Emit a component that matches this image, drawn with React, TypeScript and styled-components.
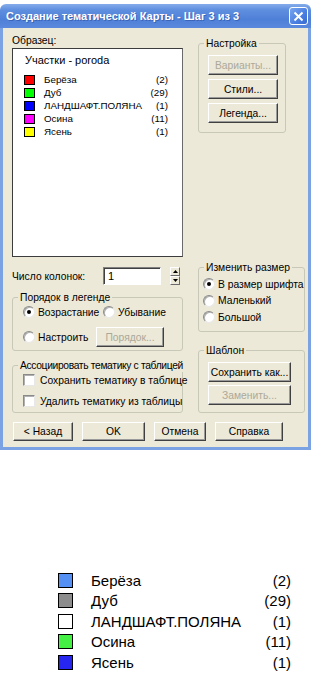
import React from "react";
import styled, { createGlobalStyle } from "styled-components";

const GlobalStyle = createGlobalStyle`
  html, body {
    margin: 0;
    padding: 0;
    background: #ffffff;
  }
  body {
    font-family: "Liberation Sans", Arial, sans-serif;
  }
`;

const FACE = "#ece9d8";

const Page = styled.div`
  width: 312px;
  height: 679px;
  display: flex;
  flex-direction: column;
  background: #ffffff;
  overflow: hidden;
`;

const Window = styled.div`
  width: 311px;
  margin-top: 4px;
  display: flex;
  flex-direction: column;
`;

const TitleBar = styled.div`
  height: 24px;
  border-radius: 6px 6px 0 0;
  background: linear-gradient(
    180deg,
    #86adeb 0%,
    #5e8ede 25%,
    #4f80d8 65%,
    #5a89dd 100%
  );
  display: flex;
  align-items: center;
  justify-content: space-between;
  padding: 0 3px 0 6px;
`;

const TitleText = styled.span`
  color: #ffffff;
  font: bold 11px "Liberation Sans", Arial, sans-serif;
  text-shadow: 1px 1px 0 #3a64b8;
  white-space: nowrap;
`;

const CloseButton = styled.div`
  width: 19px;
  height: 18px;
  box-sizing: border-box;
  border: 1px solid #ffffff;
  border-radius: 3px;
  background: linear-gradient(135deg, #78a6f0 0%, #4a7ee0 60%, #3a6cd0 100%);
  display: flex;
  align-items: center;
  justify-content: center;
`;

const Frame = styled.div`
  background: ${FACE};
  border: 3px solid #7ba3e4;
  border-top: none;
  padding: 6px 3px 6px 9px;
  display: flex;
  flex-direction: column;
  font: 10.3px "Liberation Sans", Arial, sans-serif;
  color: #000000;
`;

const TopArea = styled.div`
  display: flex;
  gap: 15px;
`;

const LeftColumn = styled.div`
  width: 171px;
  display: flex;
  flex-direction: column;
`;

const RightColumn = styled.div`
  width: 107px;
  display: flex;
  flex-direction: column;
`;

const FieldLabel = styled.div`
  line-height: 13px;
  height: 13px;
`;

const SampleBox = styled.div`
  margin-top: 1px;
  height: 209px;
  box-sizing: border-box;
  background: #ffffff;
  border: 1px solid #3c3c3c;
  border-right-color: #6a6a6a;
  padding: 4px 14px 0 11px;
  display: flex;
  flex-direction: column;
`;

const SampleTitle = styled.div`
  font-size: 11px;
  line-height: 14px;
  margin: 0 0 6px 1px;
`;

const SampleRow = styled.div`
  height: 13px;
  display: flex;
  align-items: center;
  font-size: 9.8px;
`;

const SmallSwatch = styled.span<{ $color: string }>`
  width: 11px;
  height: 10px;
  box-sizing: border-box;
  border: 1px solid #000000;
  background: ${({ $color }) => $color};
  margin-right: 9px;
  flex: none;
`;

const RowName = styled.span`
  flex: 1;
  white-space: nowrap;
`;

const RowCount = styled.span`
  white-space: nowrap;
`;

const ColumnsRow = styled.div`
  margin-top: 10px;
  height: 18px;
  display: flex;
  align-items: center;
`;

const ColumnsLabel = styled.span`
  width: 91px;
`;

const NumberInput = styled.div`
  width: 58px;
  height: 18px;
  box-sizing: border-box;
  background: #ffffff;
  border: 1px solid;
  border-color: #808080 #ffffff #ffffff #808080;
  box-shadow: inset 1px 1px 0 #404040;
  padding: 0 0 0 4px;
  display: flex;
  align-items: center;
  font-size: 11px;
`;

const Spinner = styled.div`
  margin-left: 9px;
  width: 10px;
  height: 18px;
  display: flex;
  flex-direction: column;
`;

const SpinButton = styled.div`
  flex: 1;
  box-sizing: border-box;
  background: ${FACE};
  border: 1px solid;
  border-color: #ffffff #6a6a6a #6a6a6a #ffffff;
  display: flex;
  align-items: center;
  justify-content: center;
`;

const GroupBox = styled.div<{ $top: number; $width?: number; $pad: string }>`
  margin-top: ${({ $top }) => $top}px;
  width: ${({ $width }) => ($width ? `${$width}px` : "auto")};
  box-sizing: border-box;
  border: 1px solid #c8c8b8;
  border-radius: 3px;
  padding: ${({ $pad }) => $pad};
  display: flex;
  flex-direction: column;
`;

const GroupTitle = styled.div<{ $spacing?: number }>`
  align-self: flex-start;
  margin: -7px 0 0 5px;
  padding: 0 2px;
  height: 13px;
  line-height: 13px;
  background: ${FACE};
  white-space: nowrap;
  letter-spacing: ${({ $spacing }) => $spacing ?? 0}px;
`;

const GroupBody = styled.div<{ $left: number }>`
  padding-left: ${({ $left }) => $left}px;
  display: flex;
  flex-direction: column;
`;

const OptionRow = styled.div<{ $height: number; $top?: number }>`
  height: ${({ $height }) => $height}px;
  margin-top: ${({ $top }) => $top ?? 0}px;
  display: flex;
  align-items: center;
`;

const Option = styled.div<{ $width?: number }>`
  width: ${({ $width }) => ($width ? `${$width}px` : "auto")};
  display: flex;
  align-items: center;
  white-space: nowrap;
`;

const RadioCircle = styled.span`
  width: 12px;
  height: 12px;
  box-sizing: border-box;
  border-radius: 50%;
  background: #ffffff;
  border: 1px solid;
  border-color: #8a8a8a #e8e8e8 #e8e8e8 #8a8a8a;
  box-shadow: inset 1px 1px 0 #b0b0b0;
  margin-right: 3px;
  display: flex;
  align-items: center;
  justify-content: center;
  flex: none;
`;

const RadioDot = styled.span`
  width: 4px;
  height: 4px;
  border-radius: 50%;
  background: #000000;
`;

const CheckSquare = styled.span`
  width: 12px;
  height: 12px;
  box-sizing: border-box;
  background: #ffffff;
  border: 1px solid;
  border-color: #8a8a8a #e8e8e8 #e8e8e8 #8a8a8a;
  box-shadow: inset 1px 1px 0 #b0b0b0;
  margin-right: 5px;
  flex: none;
`;

const Button = styled.div<{ $width: number; $height?: number; $top?: number; $disabled?: boolean }>`
  width: ${({ $width }) => $width}px;
  height: ${({ $height }) => $height ?? 20}px;
  margin-top: ${({ $top }) => $top ?? 0}px;
  box-sizing: border-box;
  background: ${FACE};
  border: 1px solid;
  border-color: #ffffff #404040 #404040 #ffffff;
  box-shadow: inset -1px -1px 0 #9a9a9a;
  display: flex;
  align-items: center;
  justify-content: center;
  color: ${({ $disabled }) => ($disabled ? "#aca899" : "#000000")};
  white-space: nowrap;
  flex: none;
`;

const ButtonBar = styled.div`
  margin: 9px 0 0 1px;
  display: flex;
  gap: 9px;
`;

const Legend = styled.div`
  margin-top: 120px;
  width: 233px;
  margin-left: 58px;
  display: flex;
  flex-direction: column;
  font: 15px "Liberation Sans", Arial, sans-serif;
  color: #000000;
`;

const LegendRow = styled.div`
  height: 20.5px;
  display: flex;
  align-items: center;
`;

const LegendSwatch = styled.span<{ $color: string }>`
  width: 15px;
  height: 15px;
  box-sizing: border-box;
  border: 1px solid #000000;
  background: ${({ $color }) => $color};
  margin-right: 18px;
  flex: none;
`;

const sampleRows = [
  { name: "Берёза", count: 2, color: "#ff0000" },
  { name: "Дуб", count: 29, color: "#00ff00" },
  { name: "ЛАНДШАФТ.ПОЛЯНА", count: 1, color: "#0000ff" },
  { name: "Осина", count: 11, color: "#ff00ff" },
  { name: "Ясень", count: 1, color: "#ffff00" },
];

const legendRows = [
  { name: "Берёза", count: 2, color: "#5591f4" },
  { name: "Дуб", count: 29, color: "#8c8c8c" },
  { name: "ЛАНДШАФТ.ПОЛЯНА", count: 1, color: "#ffffff" },
  { name: "Осина", count: 11, color: "#44f044" },
  { name: "Ясень", count: 1, color: "#2626f0" },
];

const Radio: React.FC<{ checked?: boolean }> = ({ checked }) => (
  <RadioCircle>{checked && <RadioDot />}</RadioCircle>
);

const Arrow: React.FC<{ up?: boolean }> = ({ up }) => (
  <svg width="5" height="3" viewBox="0 0 5 3">
    <path d={up ? "M0 3 L2.5 0 L5 3 Z" : "M0 0 L2.5 3 L5 0 Z"} fill="#000" />
  </svg>
);

const App: React.FC = () => (
  <Page>
    <GlobalStyle />
    <Window>
      <TitleBar>
        <TitleText>Создание тематической Карты - Шаг 3 из 3</TitleText>
        <CloseButton>
          <svg width="11" height="11" viewBox="0 0 11 11">
            <path d="M1.5 1.5 L9.5 9.5 M9.5 1.5 L1.5 9.5" stroke="#fff" strokeWidth="2" />
          </svg>
        </CloseButton>
      </TitleBar>
      <Frame>
        <TopArea>
          <LeftColumn>
            <FieldLabel>Образец:</FieldLabel>
            <SampleBox>
              <SampleTitle>Участки - poroda</SampleTitle>
              {sampleRows.map((r) => (
                <SampleRow key={r.name}>
                  <SmallSwatch $color={r.color} />
                  <RowName>{r.name}</RowName>
                  <RowCount>({r.count})</RowCount>
                </SampleRow>
              ))}
            </SampleBox>
            <ColumnsRow>
              <ColumnsLabel>Число колонок:</ColumnsLabel>
              <NumberInput>1</NumberInput>
              <Spinner>
                <SpinButton>
                  <Arrow up />
                </SpinButton>
                <SpinButton>
                  <Arrow />
                </SpinButton>
              </Spinner>
            </ColumnsRow>
            <GroupBox $top={12} $pad="0 6px 3px 0">
              <GroupTitle>Порядок в легенде</GroupTitle>
              <GroupBody $left={10}>
                <OptionRow $height={16}>
                  <Option $width={80}>
                    <Radio checked />
                    Возрастание
                  </Option>
                  <Option>
                    <Radio />
                    Убывание
                  </Option>
                </OptionRow>
                <OptionRow $height={20} $top={7}>
                  <Option $width={73}>
                    <Radio />
                    Настроить
                  </Option>
                  <Button $width={68} $disabled>
                    Порядок...
                  </Button>
                </OptionRow>
              </GroupBody>
            </GroupBox>
            <GroupBox $top={14} $pad="0 6px 3px 0">
              <GroupTitle $spacing={-0.35}>Ассоциировать тематику с таблицей</GroupTitle>
              <GroupBody $left={10}>
                <OptionRow $height={16}>
                  <Option>
                    <CheckSquare />
                    Сохранить тематику в таблице
                  </Option>
                </OptionRow>
                <OptionRow $height={16} $top={5}>
                  <Option>
                    <CheckSquare />
                    Удалить тематику из таблицы
                  </Option>
                </OptionRow>
              </GroupBody>
            </GroupBox>
          </LeftColumn>
          <RightColumn>
            <GroupBox $top={9} $width={88} $pad="0 7px 9px 0">
              <GroupTitle>Настройка</GroupTitle>
              <GroupBody $left={9}>
                <Button $width={70} $top={5} $disabled>
                  Варианты...
                </Button>
                <Button $width={70} $top={4}>
                  Стили...
                </Button>
                <Button $width={70} $top={4}>
                  Легенда...
                </Button>
              </GroupBody>
            </GroupBox>
            <GroupBox $top={134} $pad="0 4px 5.5px 0">
              <GroupTitle>Изменить размер</GroupTitle>
              <GroupBody $left={4}>
                <OptionRow $height={16.5} $top={2}>
                  <Option>
                    <Radio checked />
                    В размер шрифта
                  </Option>
                </OptionRow>
                <OptionRow $height={16.5}>
                  <Option>
                    <Radio />
                    Маленький
                  </Option>
                </OptionRow>
                <OptionRow $height={16.5}>
                  <Option>
                    <Radio />
                    Большой
                  </Option>
                </OptionRow>
              </GroupBody>
            </GroupBox>
            <GroupBox $top={18} $pad="0 6px 7px 0">
              <GroupTitle>Шаблон</GroupTitle>
              <GroupBody $left={9}>
                <Button $width={83} $top={5}>
                  Сохранить как...
                </Button>
                <Button $width={83} $top={3} $disabled>
                  Заменить...
                </Button>
              </GroupBody>
            </GroupBox>
          </RightColumn>
        </TopArea>
        <ButtonBar>
          <Button $width={60} $height={19}>
            &lt; Назад
          </Button>
          <Button $width={63} $height={19}>
            OK
          </Button>
          <Button $width={52} $height={19}>
            Отмена
          </Button>
          <Button $width={68} $height={19}>
            Справка
          </Button>
        </ButtonBar>
      </Frame>
    </Window>
    <Legend>
      {legendRows.map((r) => (
        <LegendRow key={r.name}>
          <LegendSwatch $color={r.color} />
          <RowName>{r.name}</RowName>
          <RowCount>({r.count})</RowCount>
        </LegendRow>
      ))}
    </Legend>
  </Page>
);

export default App;
